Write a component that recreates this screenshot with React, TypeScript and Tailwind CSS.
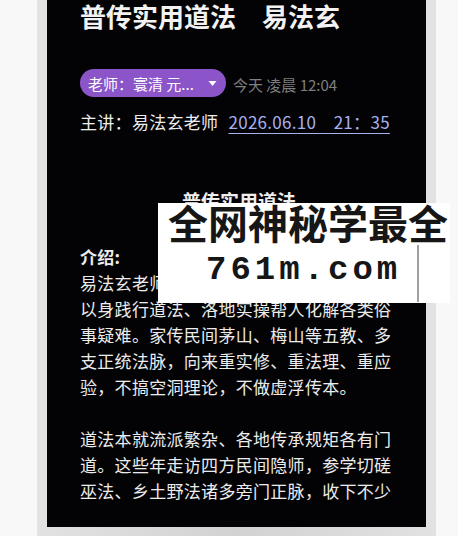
import React from "react";

const para1 = [
  "易法玄老师潜心修道三十余载，一直坚持",
  "以身践行道法、洛地实操帮人化解各类俗",
  "事疑难。家传民间茅山、梅山等五教、多",
  "支正统法脉，向来重实修、重法理、重应",
  "验，不搞空洞理论，不做虚浮传本。",
];
const para2 = [
  "道法本就流派繁杂、各地传承规矩各有门",
  "道。这些年走访四方民间隐师，参学切磋",
  "巫法、乡土野法诸多旁门正脉，收下不少",
];

export default function App() {
  return (
    <div className="relative w-[458px] h-[536px] overflow-hidden bg-[#f8f8f8] font-['Noto_Sans_CJK_SC',sans-serif]">
      <div className="flex h-full pl-[37px]">
        <div className="w-[399px] h-full bg-gradient-to-r from-[#e2e2e2] via-[#d2d2d2] to-[#e2e2e2] px-[10px] pb-[9px]">
          <div className="w-[379px] h-[527px] bg-[#030305] pl-[33px] flex flex-col">
            <div className="text-[26px] leading-[32px] font-bold text-[#f2f2f2] whitespace-nowrap">
              普传实用道法　易法玄
            </div>
            <div className="mt-[37px] flex items-center">
              <div className="h-[28px] w-[146px] rounded-full bg-[#8b54c9] flex items-center pl-[8px] pr-[8px]">
                <span className="text-[15px] leading-none text-white whitespace-nowrap">老师：寰清 元...</span>
                <svg className="ml-auto mr-[1px]" width="9" height="7" viewBox="0 0 9 7">
                  <path d="M0.5 1 L8.5 1 L4.5 6 Z" fill="#ffffff" />
                </svg>
              </div>
              <span className="ml-[7px] mt-[3px] text-[15px] leading-none text-[#7f7f7f] whitespace-nowrap">今天 凌晨 12:04</span>
            </div>
            <div className="mt-[12px] flex items-center text-[17px] leading-[26px] tracking-[0.3px] whitespace-nowrap">
              <span className="text-[#eeeeee]">主讲：易法玄老师</span>
              <span className="ml-[10px] text-[#a7b1ee] underline decoration-1 underline-offset-[4px]">2026.06.10　21：35</span>
            </div>
            <div className="mt-[53px] pr-[28px] text-center text-[19px] leading-[26px] font-bold text-[#eeeeee]">
              普传实用道法
            </div>
            <div className="mt-[30px] text-[17px] leading-[26px] tracking-[0.3px] text-[#ececec] whitespace-nowrap">
              <div className="font-bold">介绍:</div>
              {para1.map((l) => (
                <div key={l}>{l}</div>
              ))}
              <div className="h-[26px]" />
              {para2.map((l) => (
                <div key={l}>{l}</div>
              ))}
            </div>
          </div>
        </div>
      </div>

      <div className="absolute left-[158px] top-[203px] w-[292px] h-[100px] bg-white">
        <div className="pl-[10px] mt-[-1px] text-[40px] leading-[40px] font-bold text-[#161616] whitespace-nowrap">
          全网神秘学最全
        </div>
        <div className="pl-[48px] mt-[8px] font-['Liberation_Mono',monospace] text-[34px] leading-[40px] font-bold tracking-[4px] text-[#161616] whitespace-nowrap">
          761m.com
        </div>
        <div className="absolute left-[259px] top-[42px] w-[2px] h-[57px] bg-[#a0a0a0]" />
      </div>
    </div>
  );
}
